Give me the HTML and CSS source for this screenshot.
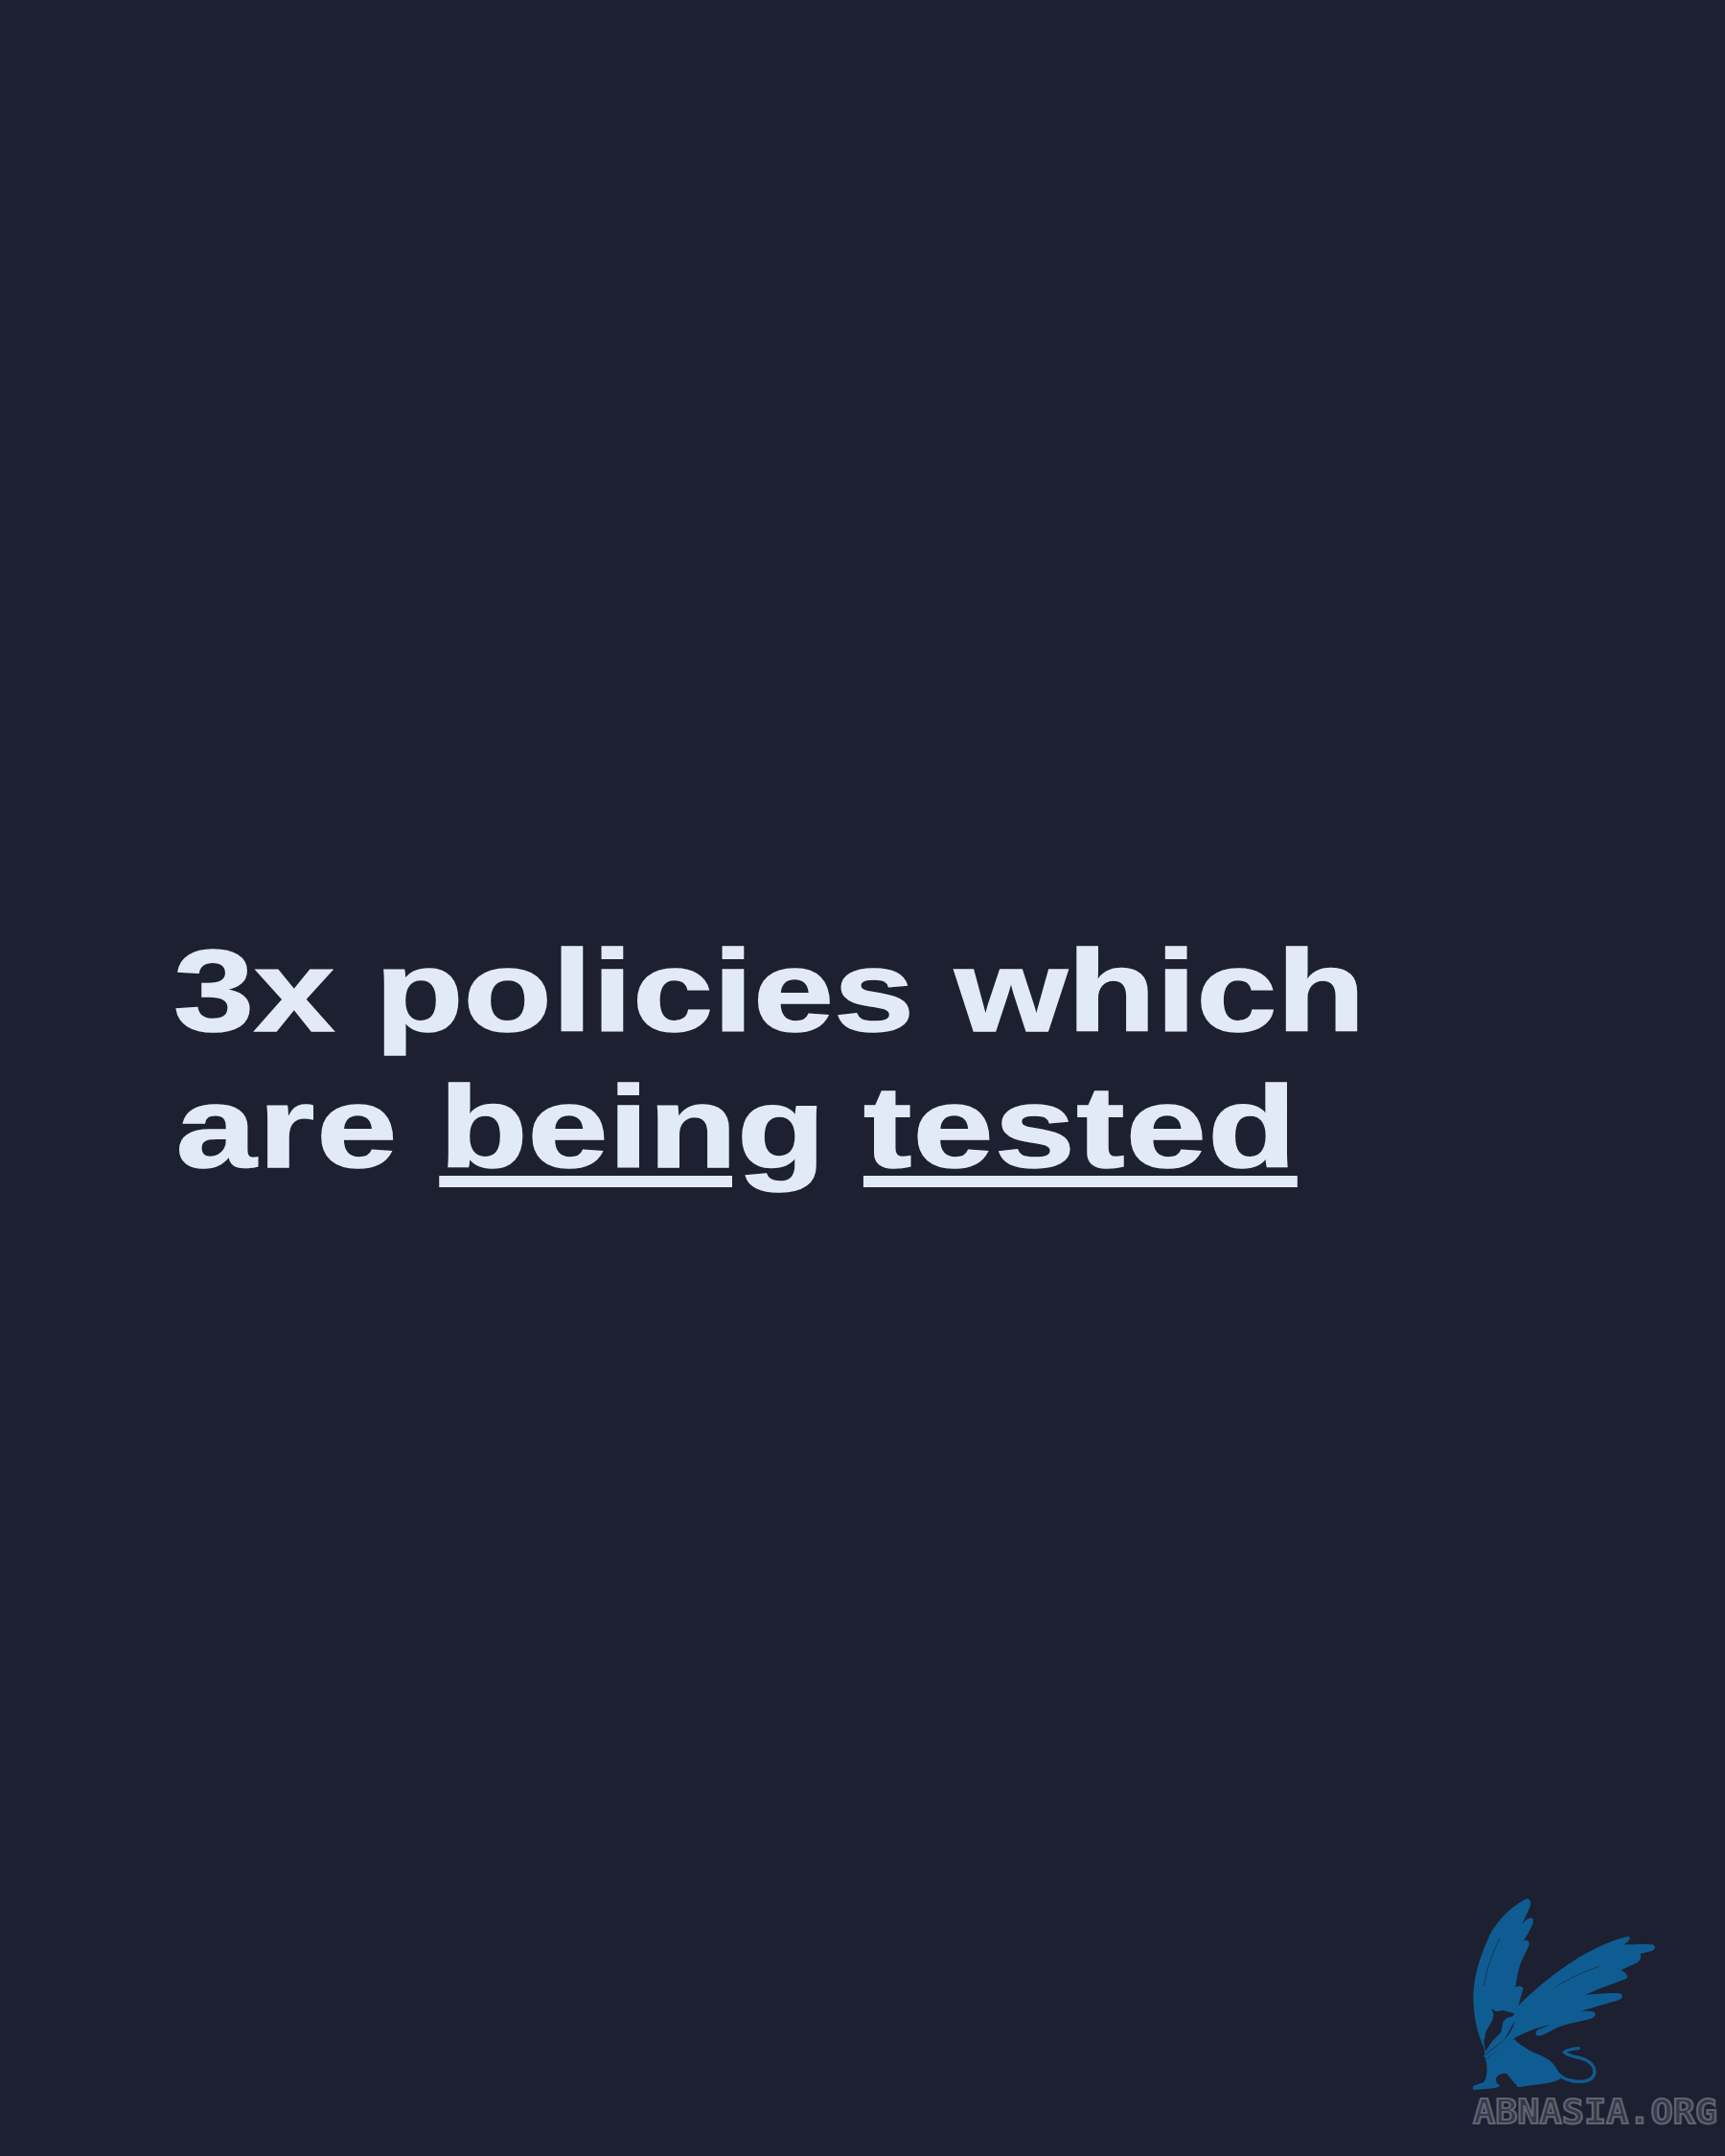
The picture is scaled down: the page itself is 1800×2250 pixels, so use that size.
FILE: index.html
```html
<!DOCTYPE html>
<html lang="en">
<head>
<meta charset="utf-8">
<title>3x policies which are being tested</title>
<link rel="stylesheet" href="styles.css">
</head>
<body>
<main class="slide">
  <h1 class="headline">3x policies which<br><span class="lead">are</span> <span class="mark">being</span><span class="gap"> </span><span class="mark wide">tested</span></h1>
  <div class="logo">
    <svg class="griffin" viewBox="0 0 900 870" width="300" height="290" aria-hidden="true">
      <path class="blue" d="M280 64C292 66 294 78 288 94L264 146C275 130 290 120 298 126C304 136 292 160 270 196C282 190 290 198 286 212L262 262C254 285 248 310 244 342C254 336 266 338 268 346L252 404L246 440L205 512L150 562L145 530C128 495 112 440 112 370C114 300 135 240 165 175C190 130 235 85 280 64Z"/>
      <path class="blue" d="M248 405C300 350 370 295 440 250C490 220 550 192 597 182C606 184 604 194 584 208C610 208 650 206 672 208C684 212 684 222 670 228L634 238C640 246 636 258 622 266L574 288C590 296 598 304 592 314C560 328 510 342 462 366C500 362 545 358 570 361C582 364 582 376 566 382C530 394 490 402 450 418C470 416 482 416 490 419C498 424 494 436 480 440C440 450 400 456 370 470C350 480 330 494 315 494C305 492 305 482 315 474L352 460C310 468 270 484 240 502L215 522L150 566L144 556L205 510C225 490 238 470 242 445Z"/>
      <path class="blue" d="M238 503C262 525 290 542 325 556C355 568 375 590 386 626C370 642 320 644 250 655L246 646C238 640 228 625 216 612C205 610 192 614 186 622C180 630 182 642 196 650C190 658 150 660 110 663L112 650L146 638C156 620 158 590 150 568Z"/>
      <path class="tail" d="M378 612C395 635 450 645 478 630C500 615 495 585 465 570C440 558 410 560 397 545C405 538 425 534 442 533"/>
      <path class="dark" d="M168 408L184 418L205 414L240 424L237 432L216 438L205 450L199 482L170 512L150 543L145 512L152 480L172 445L176 425Z"/>
      <path class="slit" d="M146 335C155 280 170 235 195 190M372 340C410 315 450 295 505 277M205 510L150 552"/>
    </svg>
    <span class="logo-text">ABNASIA.ORG</span>
  </div>
</main>
</body>
</html>
```
FILE: styles.css
```css
html, body {
  margin: 0;
  padding: 0;
  background: #1c2031;
}

.slide {
  position: relative;
  box-sizing: border-box;
  width: 1800px;
  height: 2250px;
  padding: 963px 0 0 181px;
  overflow: hidden;
  background: #1c2031;
}

.headline {
  margin: 0;
  width: 1200px;
  font-family: "Liberation Sans", Arial, sans-serif;
  font-size: 120px;
  font-weight: 700;
  line-height: 142px;
  color: #e2eaf8;
  -webkit-text-stroke: 1.5px #e2eaf8;
  transform: scaleX(1.26);
  transform-origin: left top;
}

.lead {
  margin-left: 2px;
  letter-spacing: 1.5px;
}

.gap {
  word-spacing: -2px;
}

.mark {
  text-decoration: underline;
  text-decoration-thickness: 12px;
  text-underline-offset: 9px;
  text-decoration-skip-ink: auto;
}

.wide {
  letter-spacing: 1px;
}

.logo {
  position: absolute;
  left: 1500px;
  top: 1960px;
  width: 300px;
  height: 290px;
}

.griffin {
  display: block;
}

.blue {
  fill: #0f5c92;
}

.dark {
  fill: #1c2031;
}

.slit {
  fill: none;
  stroke: #1c2031;
  stroke-width: 3;
  stroke-linecap: round;
  opacity: 0.6;
}

.tail {
  fill: none;
  stroke: #0f5c92;
  stroke-width: 10;
  stroke-linecap: round;
}

.logo-text {
  position: absolute;
  left: 37px;
  top: 225px;
  font-family: "DejaVu Sans Mono", monospace;
  font-size: 35px;
  line-height: 38px;
  font-weight: 700;
  white-space: nowrap;
  color: #343847;
  -webkit-text-stroke: 2px #5f6472;
  transform: scaleX(1.1);
  transform-origin: left top;
}
```
